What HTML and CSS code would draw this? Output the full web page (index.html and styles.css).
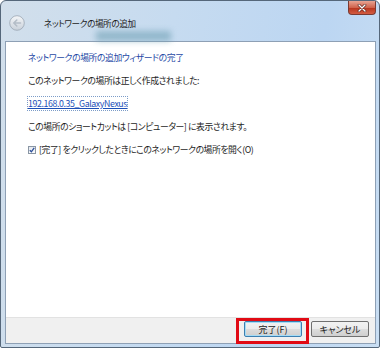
FILE: index.html
```html
<!DOCTYPE html>
<html lang="ja">
<head>
    <meta charset="UTF-8">
    <title>ネットワークの場所の追加</title>
    <link rel="stylesheet" href="styles.css">
</head>
<body>
    <div class="window">
        <div class="glass-bar"></div>
        <div class="close-btn">
            <svg width="10" height="8" viewBox="0 0 10 8">
                <path d="M2 1 L8 7 M8 1 L2 7" stroke="#5a2018" stroke-width="2.6" stroke-linecap="round"/>
                <path d="M2 1 L8 7 M8 1 L2 7" stroke="#ffffff" stroke-width="1.4" stroke-linecap="round"/>
            </svg>
        </div>

        <div class="titlebar">
            <div class="back-btn">
                <svg width="16" height="16" viewBox="0 0 16 16">
                    <defs>
                        <linearGradient id="backFill" x1="0" y1="0" x2="0" y2="1">
                            <stop offset="0" stop-color="#f4f6f8"/>
                            <stop offset="1" stop-color="#c9d1da"/>
                        </linearGradient>
                    </defs>
                    <circle cx="8" cy="8" r="7.3" fill="url(#backFill)" stroke="#9aa6b3" stroke-width="0.8"/>
                    <path d="M11.5 8 H5 M7.8 5 L4.8 8 L7.8 11" fill="none" stroke="#b4bdc7" stroke-width="1.6" stroke-linecap="round" stroke-linejoin="round"/>
                </svg>
            </div>
            <span class="title">ネットワークの場所の追加</span>
        </div>

        <div class="panel">
            <div class="content">
                <p class="heading">ネットワークの場所の追加ウィザードの完了</p>
                <p>このネットワークの場所は正しく作成されました:</p>
                <p><a class="link" href="#">192.168.0.35_GalaxyNexus</a></p>
                <p>この場所のショートカットは [コンピューター] に表示されます。</p>
                <label class="check-row">
                    <span class="checkbox">
                        <svg width="6" height="6" viewBox="0 0 6 6">
                            <path d="M0.8 3.2 L2.4 4.8 L5.2 0.8" fill="none" stroke="#2b4f9a" stroke-width="1.3"/>
                        </svg>
                    </span>
                    [完了] をクリックしたときにこのネットワークの場所を開く(O)
                </label>
            </div>
            <div class="footer">
                <button class="btn btn-default">完了(F)</button>
                <button class="btn">キャンセル</button>
            </div>
        </div>

        <div class="highlight"></div>
    </div>
</body>
</html>
```

FILE: styles.css
```css
body {
    margin: 0;
    font-family: "Noto Sans CJK JP", "Noto Sans", sans-serif;
    font-feature-settings: "palt";
    font-size: 8.8px;
    letter-spacing: -0.4px;
    color: #1e1e1e;
    background: #ffffff;
}
.window {
    position: relative;
    box-sizing: border-box;
    width: 380px;
    height: 348px;
    border: 1px solid #55677a;
    border-radius: 6px 6px 2px 2px;
    padding: 0 3px 3px 4px;
    display: flex;
    flex-direction: column;
    background: linear-gradient(100deg, #d2dfeb 0%, #c6dbf0 40%, #bcd6f2 75%, #c9def3 100%);
    overflow: hidden;
}
.glass-bar {
    position: absolute;
    left: 95px;
    top: 30px;
    width: 75px;
    height: 10px;
    background: #6d9fb3;
    filter: blur(3px);
    opacity: 0.6;
}
.close-btn {
    position: absolute;
    right: 3px;
    top: 0;
    width: 28px;
    height: 14px;
    box-sizing: border-box;
    border: 1px solid #7a3a32;
    border-top: none;
    border-radius: 0 0 4px 4px;
    background: linear-gradient(#e8a493 0%, #d0644d 50%, #b8361f 55%, #d35c42 100%);
    display: flex;
    align-items: center;
    justify-content: center;
}
.titlebar {
    position: relative;
    height: 40px;
    display: flex;
    align-items: center;
    padding-top: 4px;
    box-sizing: border-box;
}
.back-btn {
    width: 16px;
    height: 16px;
    margin-left: 4px;
    display: flex;
}
.title {
    margin-left: 19px;
    font-size: 8.6px;
    color: #1b1b1b;
}
.panel {
    flex: 1;
    display: flex;
    flex-direction: column;
    border: 1px solid #8ea0b5;
    background: #ffffff;
}
.content {
    flex: 1;
    padding: 8px 22px 0;
}
.content p {
    margin: 0 0 8px;
    line-height: 15px;
}
.heading {
    color: #1f4aa6;
}
.link {
    color: #1c4fb8;
    text-decoration: underline;
    outline: 1px dotted #7c9cc8;
    outline-offset: 0;
}
.check-row {
    display: flex;
    align-items: center;
    line-height: 15px;
}
.checkbox {
    width: 8px;
    height: 8px;
    box-sizing: border-box;
    border: 1px solid #8a96a4;
    background: linear-gradient(#e4e8ee, #fafbfc);
    margin-right: 3px;
    display: flex;
    align-items: center;
    justify-content: center;
}
.footer {
    height: 26px;
    background: #f0f0f0;
    border-top: 1px solid #e2e2e2;
    box-sizing: border-box;
    display: flex;
    justify-content: flex-end;
    align-items: flex-start;
    gap: 9px;
    padding: 3px 6px 0 0;
}
.btn {
    width: 58px;
    height: 16px;
    padding: 0;
    font-family: inherit;
    font-feature-settings: "palt";
    font-size: 9px;
    letter-spacing: 0;
    color: #1b1b1b;
    border: 1px solid #707070;
    border-radius: 2px;
    background: linear-gradient(#f2f2f2 0%, #ebebeb 50%, #dddddd 51%, #cfcfcf 100%);
}
.btn-default {
    border-color: #3c7fb1;
    box-shadow: inset 0 0 0 1px #a6dcf5;
}
.highlight {
    position: absolute;
    left: 235px;
    top: 317px;
    width: 73px;
    height: 26px;
    box-sizing: border-box;
    border: 3px solid #e10a14;
}
```
